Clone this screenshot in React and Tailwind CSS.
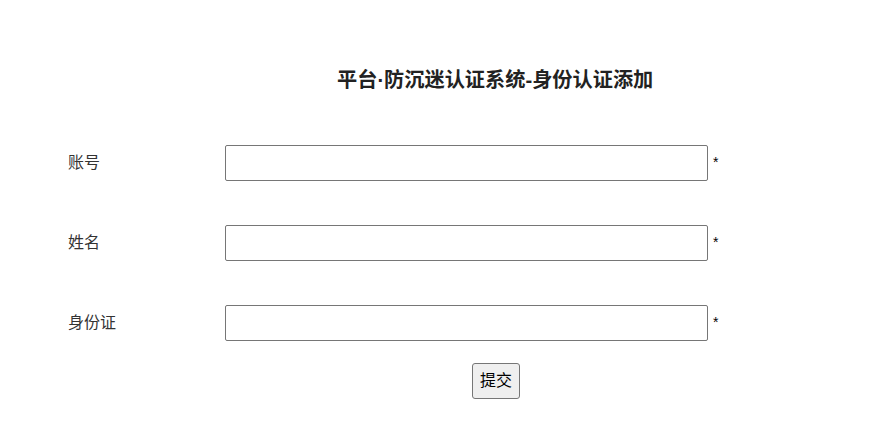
const fields = ['账号', '姓名', '身份证']

export default function App() {
  return (
    <div
      className="h-[445px] w-[885px] bg-white text-[#333]"
      style={{ fontFamily: '"Liberation Sans", "Noto Sans CJK SC", sans-serif' }}
    >
      <div className="pt-[66px] pl-[337px]">
        <h1 className="text-[20.2px] font-bold leading-[28px] text-[#222]">平台·防沉迷认证系统-身份认证添加</h1>
      </div>
      <div className="mt-[51px] flex flex-col gap-[44px]">
        {fields.map((f) => (
          <div key={f} className="flex items-center pl-[68px]">
            <span className="w-[157px] text-[16px]">{f}</span>
            <input className="h-[36px] w-[483px] rounded-[2px] border border-[#767676] bg-white" />
            <span className="ml-[5px] mt-[-2px] text-[14px] leading-none text-black">*</span>
          </div>
        ))}
      </div>
      <div className="mt-[22px] flex pl-[472px]">
        <button className="h-[36px] w-[48px] rounded-[3px] border border-[#767676] bg-[#efefef] text-[16px] text-black">
          提交
        </button>
      </div>
    </div>
  )
}
